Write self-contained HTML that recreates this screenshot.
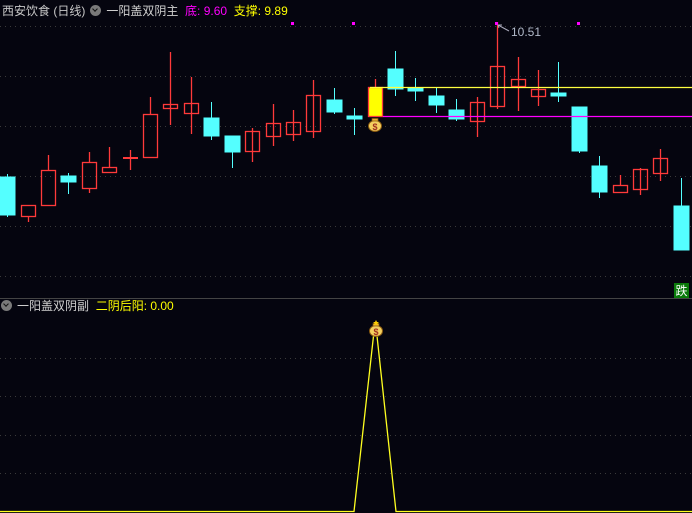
<!DOCTYPE html>
<html><head><meta charset="utf-8"><style>
html,body{margin:0;padding:0;background:#05050f;}
body{width:692px;height:513px;overflow:hidden;position:relative;font-family:"Liberation Sans","Noto Sans CJK SC",sans-serif;}
svg{position:absolute;left:0;top:0;}
.t{position:absolute;font-size:12px;white-space:nowrap;line-height:14px;}
.ic{display:inline-block;width:11px;height:11px;border-radius:50%;background:#7a7a7a;vertical-align:-1px;position:relative;margin:0 3px 0 2px;}
.ic:after{content:"";position:absolute;left:3px;top:2px;width:3px;height:3px;border-right:1.5px solid #111;border-bottom:1.5px solid #111;transform:rotate(45deg);}
</style></head><body>
<svg width="692" height="513" viewBox="0 0 692 513">
<g stroke="#3a3a3a" stroke-dasharray="1 4" stroke-width="1">
<line x1="0" y1="26.5" x2="692" y2="26.5"/><line x1="0" y1="76.5" x2="692" y2="76.5"/><line x1="0" y1="126.5" x2="692" y2="126.5"/><line x1="0" y1="176.5" x2="692" y2="176.5"/><line x1="0" y1="226.5" x2="692" y2="226.5"/><line x1="0" y1="276.5" x2="692" y2="276.5"/>
<line x1="0" y1="358.5" x2="692" y2="358.5"/><line x1="0" y1="396.5" x2="692" y2="396.5"/><line x1="0" y1="435.5" x2="692" y2="435.5"/><line x1="0" y1="473.5" x2="692" y2="473.5"/>
</g>
<line x1="0" y1="298.5" x2="692" y2="298.5" stroke="#444" stroke-width="1"/>
<g fill="#54ffff" stroke="#54ffff" stroke-width="1">
<line x1="7.5" y1="174" x2="7.5" y2="217"/><rect x="0" y="177" width="15" height="38"/>
<line x1="68.5" y1="173" x2="68.5" y2="194"/><rect x="61" y="176" width="15" height="6"/>
<line x1="211.5" y1="102" x2="211.5" y2="140"/><rect x="204" y="118" width="15" height="18"/>
<line x1="232.5" y1="136" x2="232.5" y2="168"/><rect x="225" y="136" width="15" height="16"/>
<line x1="334.5" y1="88" x2="334.5" y2="114"/><rect x="327" y="100" width="15" height="12"/>
<line x1="354.5" y1="108" x2="354.5" y2="135"/><rect x="347" y="116" width="15" height="3"/>
<line x1="395.5" y1="51" x2="395.5" y2="96"/><rect x="388" y="69" width="15" height="20"/>
<line x1="415.5" y1="78" x2="415.5" y2="101"/><rect x="408" y="88" width="15" height="3"/>
<line x1="436.5" y1="88" x2="436.5" y2="113"/><rect x="429" y="96" width="15" height="9"/>
<line x1="456.5" y1="99" x2="456.5" y2="121"/><rect x="449" y="110" width="15" height="9"/>
<line x1="558.5" y1="62" x2="558.5" y2="102"/><rect x="551" y="93" width="15" height="3"/>
<line x1="579.5" y1="107" x2="579.5" y2="153"/><rect x="572" y="107" width="15" height="44"/>
<line x1="599.5" y1="156" x2="599.5" y2="198"/><rect x="592" y="166" width="15" height="26"/>
<line x1="681.5" y1="178" x2="681.5" y2="206"/><rect x="674" y="206" width="15" height="44"/>
</g>
<g fill="none" stroke="#ff3a3a" stroke-width="1.3">
<line x1="28.5" y1="217" x2="28.5" y2="222"/><rect x="21.5" y="205.5" width="14" height="11"/>
<line x1="48.5" y1="155" x2="48.5" y2="170"/><rect x="41.5" y="170.5" width="14" height="35"/>
<line x1="89.5" y1="152" x2="89.5" y2="162"/><line x1="89.5" y1="189" x2="89.5" y2="193"/><rect x="82.5" y="162.5" width="14" height="26"/>
<line x1="109.5" y1="147" x2="109.5" y2="167"/><rect x="102.5" y="167.5" width="14" height="5"/>
<line x1="130.5" y1="150" x2="130.5" y2="170"/><line x1="123" y1="158" x2="138" y2="158" stroke-width="2"/>
<line x1="150.5" y1="97" x2="150.5" y2="114"/><rect x="143.5" y="114.5" width="14" height="43"/>
<line x1="170.5" y1="52" x2="170.5" y2="125"/><rect x="163.5" y="104.5" width="14" height="4"/>
<line x1="191.5" y1="77" x2="191.5" y2="134"/><rect x="184.5" y="103.5" width="14" height="10"/>
<line x1="252.5" y1="128" x2="252.5" y2="162"/><rect x="245.5" y="131.5" width="14" height="20"/>
<line x1="273.5" y1="104" x2="273.5" y2="146"/><rect x="266.5" y="123.5" width="14" height="13"/>
<line x1="293.5" y1="110" x2="293.5" y2="141"/><rect x="286.5" y="122.5" width="14" height="12"/>
<line x1="313.5" y1="80" x2="313.5" y2="138"/><rect x="306.5" y="95.5" width="14" height="36"/>
<line x1="375.5" y1="79" x2="375.5" y2="87"/><rect x="368.5" y="87.5" width="14" height="29" fill="#ffff00"/>
<line x1="477.5" y1="97" x2="477.5" y2="137"/><rect x="470.5" y="102.5" width="14" height="19"/>
<line x1="497.5" y1="22" x2="497.5" y2="109"/><rect x="490.5" y="66.5" width="14" height="40"/>
<line x1="518.5" y1="57" x2="518.5" y2="111"/><rect x="511.5" y="79.5" width="14" height="7"/>
<line x1="538.5" y1="70" x2="538.5" y2="106"/><rect x="531.5" y="89.5" width="14" height="7"/>
<line x1="620.5" y1="175" x2="620.5" y2="185"/><rect x="613.5" y="185.5" width="14" height="7"/>
<line x1="640.5" y1="168" x2="640.5" y2="195"/><rect x="633.5" y="169.5" width="14" height="20"/>
<line x1="660.5" y1="149" x2="660.5" y2="181"/><rect x="653.5" y="158.5" width="14" height="15"/>
</g>
<line x1="370" y1="87.5" x2="692" y2="87.5" stroke="#ffff40" stroke-width="1.2"/>
<line x1="383" y1="116.5" x2="692" y2="116.5" stroke="#ff00ff" stroke-width="1.2"/>
<g fill="#ff00ff"><rect x="291" y="22" width="3" height="3"/><rect x="352" y="22" width="3" height="3"/><rect x="495" y="22" width="3" height="3"/><rect x="577" y="22" width="3" height="3"/></g>
<path d="M498 25 L509 31 M498 25 l4 0 M498 25 l1 3" stroke="#aab" fill="none" stroke-width="1"/>
<text x="511" y="36" fill="#b0b8c8" font-size="12" font-family="Liberation Sans,sans-serif">10.51</text>
<g id="bag">
<ellipse cx="375" cy="126" rx="6.5" ry="5.5" fill="#f4d060" stroke="#8a5a10" stroke-width="1"/>
<rect x="372" y="118.5" width="6" height="2.5" fill="#e8b030" stroke="#8a5a10" stroke-width="0.7"/>
<text x="375" y="130" fill="#a03020" font-size="9" text-anchor="middle" font-weight="bold" font-family="Liberation Sans,sans-serif">$</text>
</g>
<path d="M0 511.5 L354 511.5 L373.5 336 L377 336 L396 511.5 L692 511.5" fill="none" stroke="#ffff20" stroke-width="1.3"/>
<g transform="translate(1,205)"><use href="#bag"/></g>
<path d="M376 320 l1 2 2 0 -1.5 1.3 .5 2 -2-1 -2 1 .5-2 -1.5-1.3 2 0z" fill="#ffd000"/>
<rect x="674" y="283" width="15" height="15" fill="#0a7a0a"/>
<text x="681.5" y="295" fill="#fff" font-size="12" text-anchor="middle" font-family="Noto Sans CJK SC,sans-serif">跌</text>
</svg>
<div class="t" style="left:2px;top:4px;color:#c8c8c8">西安饮食 (日线)<span class="ic" style="margin:0 5px 0 5px"></span><span style="color:#d0d0d0">一阳盖双阴主</span> <span style="color:#ff00ff">&nbsp;底: 9.60</span> <span style="color:#ffff00">&nbsp;支撑: 9.89</span></div>
<div class="t" style="left:0px;top:299px;color:#c8c8c8"><span class="ic" style="margin:0 5px 0 1px"></span><span style="color:#d0d0d0">一阳盖双阴副</span> <span style="color:#ffff00">&nbsp;二阴后阳: 0.00</span></div>
</body></html>
